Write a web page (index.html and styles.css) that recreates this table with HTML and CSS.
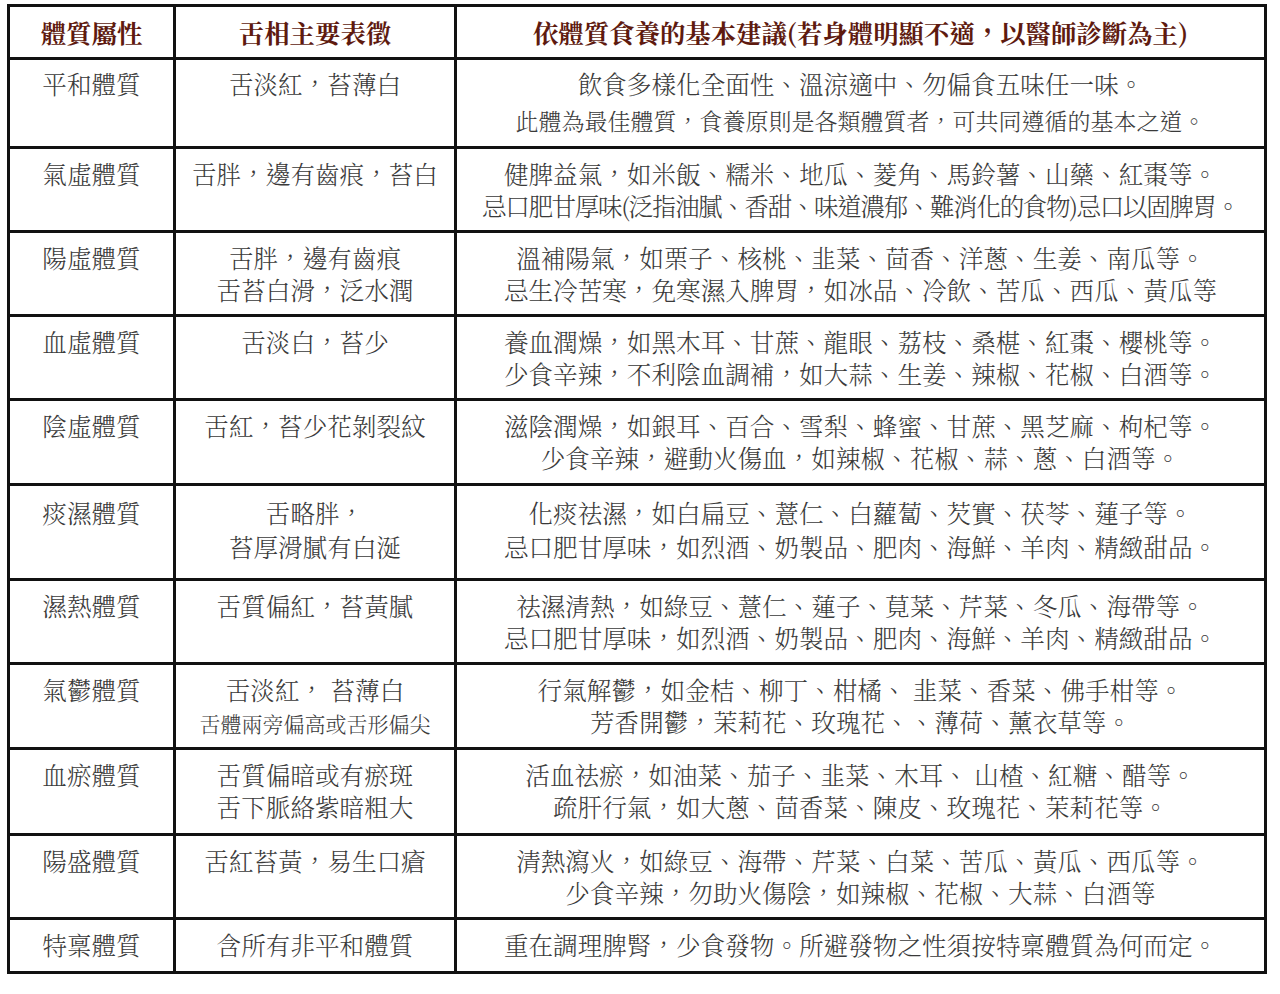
FILE: index.html
```html
<!DOCTYPE html>
<html lang="zh-Hant">
<head>
<meta charset="utf-8">
<title>體質食養建議</title>
<link rel="stylesheet" href="styles.css">
</head>
<body>
<table class="tbl">
  <colgroup>
    <col class="c1"><col class="c2"><col class="c3">
  </colgroup>
  <tr class="head">
    <th>體質屬性</th>
    <th>舌相主要表徵</th>
    <th>依體質食養的基本建議(若身體明顯不適，以醫師診斷為主)</th>
  </tr>
  <tr class="r90 wide">
    <td>平和體質</td>
    <td>舌淡紅，苔薄白</td>
    <td>飲食多樣化全面性、溫涼適中、勿偏食五味任一味。<br><span class="sub">此體為最佳體質，食養原則是各類體質者，可共同遵循的基本之道。</span></td>
  </tr>
  <tr class="r84">
    <td>氣虛體質</td>
    <td>舌胖，邊有齒痕，苔白</td>
    <td>健脾益氣，如米飯、糯米、地瓜、菱角、馬鈴薯、山藥、紅棗等。<br><span class="tight">忌口肥甘厚味(泛指油膩、香甜、味道濃郁、難消化的食物)忌口以固脾胃。</span></td>
  </tr>
  <tr class="r84">
    <td>陽虛體質</td>
    <td>舌胖，邊有齒痕<br>舌苔白滑，泛水潤</td>
    <td>溫補陽氣，如栗子、核桃、韭菜、茴香、洋蔥、生姜、南瓜等。<br>忌生冷苦寒，免寒濕入脾胃，如冰品、冷飲、苦瓜、西瓜、黃瓜等</td>
  </tr>
  <tr class="r84">
    <td>血虛體質</td>
    <td>舌淡白，苔少</td>
    <td>養血潤燥，如黑木耳、甘蔗、龍眼、荔枝、桑椹、紅棗、櫻桃等。<br>少食辛辣，不利陰血調補，如大蒜、生姜、辣椒、花椒、白酒等。</td>
  </tr>
  <tr class="r85">
    <td>陰虛體質</td>
    <td>舌紅，苔少花剝裂紋</td>
    <td>滋陰潤燥，如銀耳、百合、雪梨、蜂蜜、甘蔗、黑芝麻、枸杞等。<br>少食辛辣，避動火傷血，如辣椒、花椒、蒜、蔥、白酒等。</td>
  </tr>
  <tr class="r95 tall">
    <td>痰濕體質</td>
    <td>舌略胖，<br>苔厚滑膩有白涎</td>
    <td>化痰祛濕，如白扁豆、薏仁、白蘿蔔、芡實、茯苓、蓮子等。<br>忌口肥甘厚味，如烈酒、奶製品、肥肉、海鮮、羊肉、精緻甜品。</td>
  </tr>
  <tr class="r84">
    <td>濕熱體質</td>
    <td>舌質偏紅，苔黃膩</td>
    <td>祛濕清熱，如綠豆、薏仁、蓮子、莧菜、芹菜、冬瓜、海帶等。<br>忌口肥甘厚味，如烈酒、奶製品、肥肉、海鮮、羊肉、精緻甜品。</td>
  </tr>
  <tr class="r85">
    <td>氣鬱體質</td>
    <td>舌淡紅， 苔薄白<br><span class="small">舌體兩旁偏高或舌形偏尖</span></td>
    <td>行氣解鬱，如金桔、柳丁、柑橘、 韭菜、香菜、佛手柑等。<br>芳香開鬱，茉莉花、玫瑰花、、薄荷、薰衣草等。</td>
  </tr>
  <tr class="r86">
    <td>血瘀體質</td>
    <td>舌質偏暗或有瘀斑<br>舌下脈絡紫暗粗大</td>
    <td>活血祛瘀，如油菜、茄子、韭菜、木耳、 山楂、紅糖、醋等。<br>疏肝行氣，如大蔥、茴香菜、陳皮、玫瑰花、茉莉花等。</td>
  </tr>
  <tr class="r84">
    <td>陽盛體質</td>
    <td>舌紅苔黃，易生口瘡</td>
    <td>清熱瀉火，如綠豆、海帶、芹菜、白菜、苦瓜、黃瓜、西瓜等。<br>少食辛辣，勿助火傷陰，如辣椒、花椒、大蒜、白酒等</td>
  </tr>
  <tr class="r54">
    <td>特稟體質</td>
    <td>含所有非平和體質</td>
    <td>重在調理脾腎，少食發物。所避發物之性須按特稟體質為何而定。</td>
  </tr>
</table>
</body>
</html>
```
FILE: styles.css
```css
html, body {
  margin: 0;
  padding: 0;
  background: #ffffff;
}
body {
  padding: 4px 0 0 7px;
  font-family: "Noto Serif CJK TC", "Noto Sans CJK TC", "Noto Sans CJK SC", serif;
  color: #3a3a3a;
}
.tbl {
  border-collapse: collapse;
  border: 3px solid #000;
  width: 1257px;
  table-layout: fixed;
}
.c1 { width: 166px; }
.c2 { width: 281px; }
.c3 { width: 810px; }
.tbl th,
.tbl td {
  border: 3px solid #111;
  text-align: center;
  font-size: 24.6px;
  line-height: 32px;
  padding: 0 2px;
  white-space: nowrap;
}
.tbl th {
  height: 50px;
  vertical-align: middle;
  font-size: 25.4px;
  font-weight: 700;
  color: #5e1a0f;
  padding-top: 0;
}
.tbl td {
  vertical-align: top;
  padding-top: 9px;
  font-weight: 300;
}
.wide td { line-height: 36px; padding-top: 6px; }
.tall td { line-height: 34px; padding-top: 10px; }
.small { font-size: 21px; }
.sub { font-size: 23px; }
.tight { letter-spacing: -1.4px; }
.r90 td { height: 80px; }
.r84 td { height: 72px; }
.r85 td { height: 73px; }
.r86 td { height: 74px; }
.r95 td { height: 82px; }
.r54 td { height: 42px; }
```
